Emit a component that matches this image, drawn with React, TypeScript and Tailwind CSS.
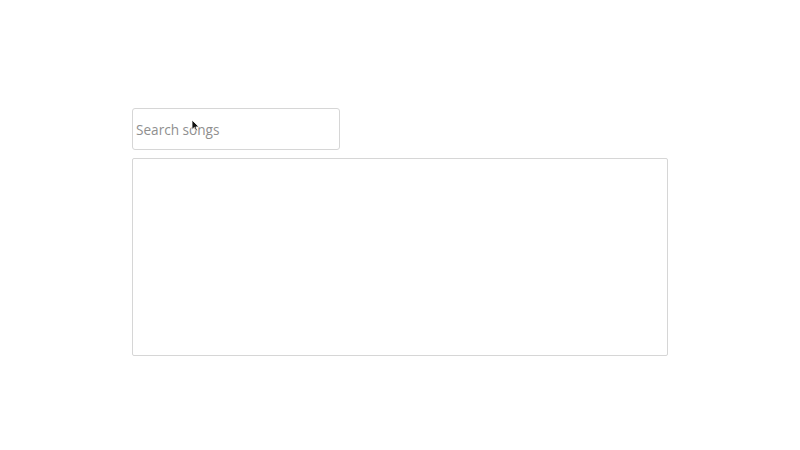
import { useState } from "react";

function App() {
  const [query, setQuery] = useState("");

  return (
    <div className="min-h-[450px] w-full bg-white font-['Open_Sans',sans-serif]">
      <div className="flex flex-col pl-[132px] pt-[108px]">
        {/* Search */}
        <div className="relative w-[208px]">
          <input
            type="text"
            value={query}
            onChange={(e) => setQuery(e.target.value)}
            placeholder="Search songs"
            className="h-[42px] w-full rounded-[3px] border border-[#d6d6d6] px-[3px] text-[13.6px] text-[#333] outline-none placeholder:text-[#8f8f8f]"
          />
          {/* Cursor */}
          <svg
            className="pointer-events-none absolute left-[59px] top-[11px]"
            width="9"
            height="13"
            viewBox="0 0 9 13"
          >
            <path d="M1 1 L1 10.5 L3.4 8.4 L5 12 L6.4 11.4 L4.9 7.9 L8 7.9 Z" fill="#111" stroke="#fff" strokeWidth="0.8" />
          </svg>
        </div>

        {/* Results list */}
        <div className="mt-[8px] h-[198px] w-[536px] rounded-[2px] border border-[#d6d6d6]"></div>
      </div>
    </div>
  );
}

export default App;
